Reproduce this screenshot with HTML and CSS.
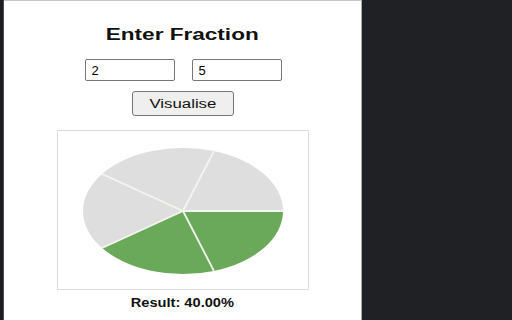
FILE: index.html
```html
<!DOCTYPE html>
<html>
<head>
<meta charset="utf-8">
<link rel="stylesheet" href="styles.css">
</head>
<body>
<div class="screen">
  <div class="side"></div>
  <main class="panel">
    <h1 class="title"><span class="wide t1">Enter Fraction</span></h1>
    <div class="inputs">
      <input class="field" type="text" value="2">
      <input class="field" type="text" value="5">
    </div>
    <button class="btn"><span class="wide t2">Visualise</span></button>
    <div class="chart">
      <svg width="250" height="158" viewBox="0 0 250 158">
        <path d="M125,80 L225,80 A100,63 0 0,1 155.9,139.9 Z" fill="#6aa85a"/>
        <path d="M125,80 L155.9,139.9 A100,63 0 0,1 44.1,117 Z" fill="#6aa85a"/>
        <path d="M125,80 L44.1,117 A100,63 0 0,1 44.1,43 Z" fill="#dedede"/>
        <path d="M125,80 L44.1,43 A100,63 0 0,1 155.9,20.1 Z" fill="#dedede"/>
        <path d="M125,80 L155.9,20.1 A100,63 0 0,1 225,80 Z" fill="#dedede"/>
        <g stroke="#f3f6f0" stroke-width="1.8" stroke-linecap="butt">
          <line x1="125" y1="80" x2="225" y2="80"/>
          <line x1="125" y1="80" x2="155.9" y2="139.9"/>
          <line x1="125" y1="80" x2="44.1" y2="117"/>
          <line x1="125" y1="80" x2="44.1" y2="43"/>
          <line x1="125" y1="80" x2="155.9" y2="20.1"/>
        </g>
      </svg>
    </div>
    <p class="result"><span class="wide t3">Result: 40.00%</span></p>
  </main>
</div>
</body>
</html>
```
FILE: styles.css
```css
html, body {
  margin: 0;
  padding: 0;
  background: #202124;
  width: 512px;
  height: 320px;
  overflow: hidden;
}
.screen {
  display: flex;
  height: 320px;
}
.side {
  width: 3px;
  background: #1c1d20;
  border-right: 1px solid #4a4b50;
}
.panel {
  width: 357px;
  background: #ffffff;
  border-top: 1px solid #c6c6c6;
  border-right: 1px solid #a9a9a9;
  display: flex;
  flex-direction: column;
  align-items: center;
  padding-top: 24px;
  font-family: "Liberation Sans", Arial, sans-serif;
  color: #000;
}
.wide {
  display: inline-block;
  transform-origin: center;
}
.title {
  margin: 0;
  font-size: 16px;
  line-height: 20px;
  font-weight: bold;
  color: #111;
}
.t1 { transform: scaleX(1.41); }
.inputs {
  display: flex;
  gap: 17px;
  margin-top: 14px;
  padding-left: 1px;
}
.field {
  box-sizing: border-box;
  width: 90px;
  height: 22px;
  margin: 0;
  border: 1px solid #767676;
  border-radius: 2px;
  padding: 0 6px;
  font-family: "Liberation Sans", Arial, sans-serif;
  font-size: 13px;
  color: #000;
  background: #fff;
}
.btn {
  box-sizing: border-box;
  width: 102px;
  height: 25px;
  margin-top: 10px;
  padding: 0;
  background: #efefef;
  border: 1px solid #767676;
  border-radius: 3px;
  font-family: "Liberation Sans", Arial, sans-serif;
  font-size: 12px;
  color: #111;
}
.t2 { transform: scaleX(1.4); }
.chart {
  margin-top: 14px;
  width: 250px;
  height: 158px;
  border: 1px solid #dcdcdc;
}
.chart svg { display: block; }
.result {
  margin: 5px 0 0;
  font-size: 12px;
  line-height: 16px;
  font-weight: bold;
  color: #111;
}
.t3 { transform: scaleX(1.22); }
```
